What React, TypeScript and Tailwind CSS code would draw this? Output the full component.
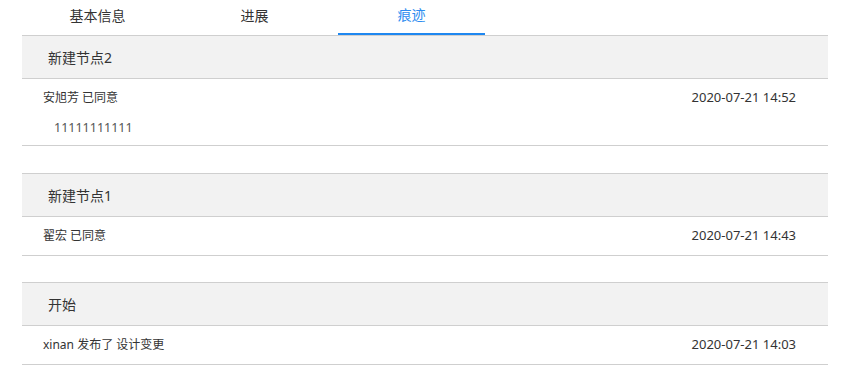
const tabs = ["基本信息", "进展", "痕迹"];

const nodes = [
  {
    id: 1,
    title: "新建节点2",
    who: "安旭芳 已同意",
    note: "11111111111",
    time: "2020-07-21 14:52",
  },
  {
    id: 2,
    title: "新建节点1",
    who: "翟宏 已同意",
    note: "",
    time: "2020-07-21 14:43",
  },
  {
    id: 3,
    title: "开始",
    who: "xinan 发布了 设计变更",
    note: "",
    time: "2020-07-21 14:03",
  },
];

export default function App() {
  return (
    <div
      className="w-[845px] h-[367px] bg-white text-[#333] overflow-hidden"
      style={{ fontFamily: '"Noto Sans", "Noto Sans CJK SC", sans-serif' }}
    >
      <div className="mx-[22px] w-[806px]">
        {/* tabs */}
        <div className="flex h-[36px] border-b border-[#cfcfcf] pl-[2px] gap-[10px]">
          {tabs.map((t, i) => (
            <div
              key={t}
              className={`w-[147px] h-[35px] flex items-center justify-center pb-[5px] text-[14px] ${
                i === 2 ? "text-[#2d8cf0] border-b-2 border-[#1e87f0]" : "text-[#333]"
              }`}
            >
              {t}
            </div>
          ))}
        </div>

        {nodes.map((n, i) => (
          <div
            key={n.id}
            className={i === 0 ? "" : `${i === 1 ? "mt-[27px]" : "mt-[26px]"} border-t border-[#cfcfcf]`}
          >
            <div className="h-[43px] bg-[#f2f2f2] border-b border-[#cfcfcf] flex items-center pl-[26px] text-[14px] text-[#333]">
              {n.title}
            </div>
            {n.note ? (
              <div className="h-[67px] border-b border-[#cfcfcf] pl-[21px] pr-[32px] pt-[9px] flex flex-col text-[12px]">
                <div className="flex justify-between items-center h-[20px]">
                  <span>{n.who}</span>
                  <span className="text-[13px]">{n.time}</span>
                </div>
                <div className="h-[20px] mt-[10px] pl-[11px] flex items-center text-[12.5px] text-[#555]">
                  {n.note}
                </div>
              </div>
            ) : (
              <div className="h-[39px] border-b border-[#cfcfcf] pl-[21px] pr-[32px] flex justify-between items-center text-[12px]">
                <span>{n.who}</span>
                <span className="text-[13px]">{n.time}</span>
              </div>
            )}
          </div>
        ))}
      </div>
    </div>
  );
}
